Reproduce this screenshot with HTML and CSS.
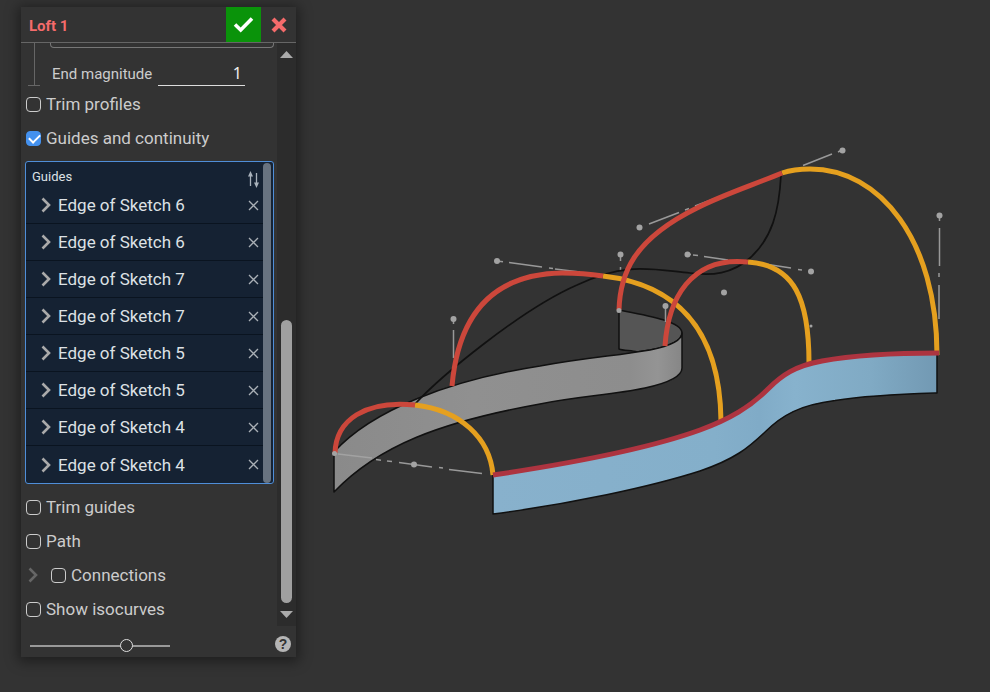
FILE: index.html
```html
<!DOCTYPE html>
<html lang="en">
<head>
<meta charset="utf-8">
<title>Loft 1</title>
<link rel="stylesheet" href="styles.css">
</head>
<body>
<main class="workspace">
  <form class="panel">
    <header class="panel-header">
      <h1 class="title">Loft 1</h1>
      <button type="button" class="accept" aria-label="Accept">
        <svg width="21" height="17" viewBox="0 0 21 17"><path d="M2 8.5 7.7 14 19 2.5" fill="none" stroke="#fff" stroke-width="3.6"/></svg>
      </button>
      <button type="button" class="cancel" aria-label="Cancel">
        <svg width="16" height="16" viewBox="0 0 16 16"><path d="M2 2 14 14M14 2 2 14" fill="none" stroke="#f56b6b" stroke-width="4.2"/></svg>
      </button>
    </header>

    <div class="panel-body">
      <div class="fields">
        <div class="magnitude-group">
          <div class="tree-line"></div>
          <div class="magnitude">
            <div class="previous-box"></div>
            <div class="magnitude-row">
              <label for="end-magnitude">End magnitude</label>
              <input id="end-magnitude" class="number" type="text" value="1">
            </div>
          </div>
        </div>

        <label class="option"><input type="checkbox">Trim profiles</label>
        <label class="option"><input type="checkbox" checked>Guides and continuity</label>

        <section class="guides">
          <div class="guides-main">
            <div class="guides-head">
              <h2>Guides</h2>
              <button type="button" aria-label="Reorder">
                <svg width="13" height="17" viewBox="0 0 13 17"><path d="M3.5 15V3M9.5 2v12" fill="none" stroke="#a9b2bb" stroke-width="1.3"/><path d="M1 5.5 3.5 0 6 5.5zM7 11.5h5L9.5 17z" fill="#a9b2bb"/></svg>
              </button>
            </div>
            <ul class="guide-list" id="guide-list"></ul>
          </div>
          <div class="guides-scroll"></div>
        </section>

        <label class="option"><input type="checkbox">Trim guides</label>
        <label class="option"><input type="checkbox">Path</label>
        <div class="nested">
          <button type="button" class="expand" aria-label="Expand connections">
            <svg width="10" height="16" viewBox="0 0 10 16"><path d="M1.5 1.5 8 8 1.5 14.5" fill="none" stroke="#666" stroke-width="2.6"/></svg>
          </button>
          <label class="option"><input type="checkbox">Connections</label>
        </div>
        <label class="option"><input type="checkbox">Show isocurves</label>
      </div>

      <div class="scrollbar">
        <button type="button" aria-label="Scroll up"><svg width="13" height="7" viewBox="0 0 13 7"><path d="M0 7 6.5 0 13 7z" fill="#aaa"/></svg></button>
        <div class="thumb"></div>
        <button type="button" aria-label="Scroll down"><svg width="13" height="7" viewBox="0 0 13 7"><path d="M0 0 6.5 7 13 0z" fill="#aaa"/></svg></button>
      </div>
    </div>

    <footer class="panel-footer">
      <input class="opacity" type="range" min="0" max="100" value="71" aria-label="Preview opacity">
      <button type="button" class="help" aria-label="Help">?</button>
    </footer>
  </form>

  <svg class="model" viewBox="296 0 694 692" preserveAspectRatio="xMinYMin meet" role="img" aria-label="Loft model">
    <defs>
      <linearGradient id="blue" x1="493" x2="937" y1="0" y2="0" gradientUnits="userSpaceOnUse">
        <stop offset="0" stop-color="#88b1cc"/><stop offset=".5" stop-color="#84afca"/><stop offset=".6" stop-color="#80abc7"/><stop offset=".68" stop-color="#87b2cd"/><stop offset=".85" stop-color="#80aac4"/><stop offset="1" stop-color="#7299b3"/>
      </linearGradient>
      <linearGradient id="grey" x1="334" x2="682" y1="0" y2="0" gradientUnits="userSpaceOnUse">
        <stop offset="0" stop-color="#8a8a8a"/><stop offset=".4" stop-color="#909090"/><stop offset=".85" stop-color="#8d8d8d"/><stop offset=".93" stop-color="#949494"/><stop offset="1" stop-color="#868686"/>
      </linearGradient>
    </defs>
    <g stroke="#111" stroke-width="1.5" stroke-linejoin="round">
      <path fill="#555" d="M619 310C645 315 682 321 682 333C682 340 670 346 650 350L637 352C632 350 624 351 619 349Z"/>
      <path fill="url(#grey)" d="M334 452C372 410 450 380 540 366C590 357 615 356 650 350C670 346 682 340 682 333V368C682 377 668 383 645 388C612 395 580 396 540 404C440 422 378 446 334 492Z"/>
      <path fill="url(#blue)" d="M493 475C560 465 645 450 700 430C730 419 750 407 768 389C782 375 795 366 822 361C860 354 900 353 937 353V393C905 394 870 395 835 400.5C800 405 782 415 765 432C748 448 735 459 700 471C650 487 570 504 493 514Z"/>
    </g>
    <g fill="none" stroke="#999" stroke-width="1.5">
      <path d="M338 454 372 458" stroke="#a2a2a2"/>
      <path d="M376 459.5l5 .7M387 461l5 .6M399 462.5 432 467M439 467.6l4 .5M449 469.5 482 473.5"/>
      <path d="M453.5 321v3M453.5 330v28M497 261l6 .8M509 262.5 542 267M549 268l4 .5M555 269 580 272"/>
      <path d="M620.5 256v5M620.5 267v3M665.5 308v14"/>
      <path d="M649 224 679 212.5M685 210l4-1.5M695 206 740 189M803 165.5 832 154M838 152l4-2"/>
      <path d="M687 254l4 .4M693 255l5 .6M704 256.5 728 260M768 264.5 791 268M798 269.6l4 .5"/>
      <path d="M939.5 216v5M939.5 228v38M939 273v4M939 285v34"/>
    </g>
    <path d="M415 404C440 377 520 310 577 285C625 262 650 269 690 273C712 276 732 274 750 258C772 238 779 212 781 175" fill="none" stroke="#111" stroke-width="1.7"/>
    <g fill="none" stroke="#e5a01f" stroke-width="5">
      <path d="M603 276C672 284 720 325 721 421"/>
      <path d="M748 262C795 265 809 300 809 363"/>
      <path d="M782 173C791 170 800 169 810 169C880 169 937 240 937 355"/>
      <path d="M415 405C460 410 490 438 493 475"/>
    </g>
    <g fill="none" stroke="#cc473b" stroke-width="5">
      <path d="M335 453C336 420 365 400 415 405"/>
      <path d="M452 386C458 318 490 274 562 273C578 273 590 274 603 276"/>
      <path d="M619 310C620 275 632 240 697 208C722 195 753 185 782 173"/>
      <path d="M665 346C668 300 690 256 748 262"/>
    </g>
    <path d="M493 475C560 465 645 450 700 430C730 419 750 407 768 389C782 375 795 366 822 361C860 354 900 353 939 353" fill="none" stroke="#ad3440" stroke-width="5"/>
    <g fill="#a3a3a3">
      <circle cx="842.5" cy="150.5" r="3"/><circle cx="939.5" cy="215.5" r="3"/><circle cx="639.5" cy="227.5" r="3"/>
      <circle cx="620.5" cy="254.5" r="3"/><circle cx="497" cy="261" r="3"/><circle cx="687.5" cy="254.5" r="3"/>
      <circle cx="811" cy="271.5" r="3"/><circle cx="724" cy="292.5" r="3"/><circle cx="665.5" cy="306" r="3"/>
      <circle cx="453.5" cy="319" r="3"/><circle cx="414" cy="464.5" r="3"/>
      <circle cx="811" cy="326" r="1.5"/><circle cx="619" cy="310.5" r="2.5"/><circle cx="334.5" cy="453.5" r="2.5"/>
    </g>
  </svg>
</main>
<script src="script.js"></script>
</body>
</html>
```
FILE: styles.css
```css
* { box-sizing: border-box; }

body {
  margin: 0;
  background: #333;
  color: #ccc;
  font: 17px/20px Roboto, "Liberation Sans", sans-serif;
}

button {
  display: flex;
  align-items: center;
  justify-content: center;
  padding: 0;
  border: 0;
  background: none;
  color: inherit;
}

svg { display: block; }

.workspace {
  display: flex;
  align-items: flex-start;
  min-height: 100vh;
  overflow: hidden;
}

.panel {
  flex: 0 0 275px;
  margin: 7px 0 0 21px;
  background: #333;
  box-shadow: 0 2px 12px 3px rgba(0, 0, 0, 0.4);
}

.model {
  flex: 1;
  min-width: 0;
}

.panel-header {
  display: flex;
  height: 36px;
  border-bottom: 1px solid #666;
}

.title {
  flex: 1;
  margin: 0;
  padding-left: 8px;
  color: #f56b6b;
  font-size: 15px;
  font-weight: 700;
  line-height: 38px;
}

.accept,
.cancel { width: 35px; }

.accept { background: #0a930a; }

.panel-body { display: flex; }

.fields {
  flex: 1;
  padding: 0 3px 0 5px;
}

.magnitude-group {
  display: flex;
  height: 44px;
  padding-left: 2px;
}

.tree-line {
  width: 12px;
  height: 43px;
  border-bottom: 1px solid #666;
  background: linear-gradient(#666, #666) center / 1px 100% no-repeat;
}

.magnitude {
  flex: 1;
  padding-left: 10px;
}

.previous-box {
  height: 5px;
  border: 1px solid #777;
  border-top: 0;
  border-radius: 0 0 4px 4px;
}

.magnitude-row {
  display: flex;
  justify-content: space-between;
  align-items: flex-end;
  height: 38px;
  padding: 0 29px 0 2px;
  font-size: 15px;
  line-height: 24px;
}

.number {
  width: 87px;
  height: 24px;
  padding: 0 3px 1px;
  border: 0;
  border-bottom: 1px solid #ddd;
  background: none;
  color: #eee;
  font: 16px/20px "Noto Sans", sans-serif;
  text-align: right;
}

.option {
  display: flex;
  align-items: center;
  gap: 5px;
  height: 34px;
}

.option input {
  width: 15px;
  height: 15px;
  margin: 0;
  border: 1px solid #ccc;
  border-radius: 4px;
  appearance: none;
}

.option input:checked {
  border-color: #4491ee;
  background: #4491ee;
}

.option input:checked::before {
  content: "";
  display: block;
  width: 9px;
  height: 5px;
  margin: 3px 2px;
  border: solid #fff;
  border-width: 0 0 2px 2px;
  transform: translateY(-1px) rotate(-45deg);
}

.nested {
  display: flex;
  align-items: center;
  gap: 12px;
}

.expand {
  width: 13px;
  height: 20px;
}

.guides {
  display: flex;
  margin: 6px 0 6px -1px;
  border: 1px solid #4f8ed8;
  border-radius: 3px;
  background: #152233;
  color: #dde1e5;
}

.guides-main { flex: 1; }

.guides-head {
  display: flex;
  justify-content: space-between;
  height: 25px;
  padding: 5px 3px 0 6px;
}

.guides-head h2 {
  margin: 0;
  font-size: 13px;
  font-weight: 400;
  line-height: 20px;
}

.guides-head button { height: 24px; }

.guide-list {
  margin: 0;
  padding: 0;
  list-style: none;
}

.guide {
  display: flex;
  align-items: center;
  height: 37px;
  padding: 0 4px 0 15px;
  border-bottom: 1px solid #0a1420;
}

.guide:last-child { border: 0; }

.guide .name {
  flex: 1;
  padding-left: 7px;
}

.guides-scroll {
  width: 8px;
  margin: 1px 2px 0 0;
  border-radius: 4px;
  background: #687380;
}

.scrollbar {
  display: flex;
  flex: 0 0 19px;
  flex-direction: column;
  align-items: center;
  background: #2c2c2c;
}

.scrollbar button {
  width: 19px;
  height: 23px;
}

.thumb {
  width: 11px;
  height: 283px;
  margin-top: auto;
  border-radius: 6px;
  background: #a0a0a0;
}

.panel-footer {
  display: flex;
  align-items: center;
  justify-content: space-between;
  height: 31px;
  padding: 0 5px 0 9px;
}

.opacity {
  width: 140px;
  height: 14px;
  margin: 8px 0 0;
  background: linear-gradient(#999, #999) center / 100% 2px no-repeat;
  appearance: none;
}

.opacity::-webkit-slider-thumb {
  width: 13px;
  height: 13px;
  border: 1px solid #ddd;
  border-radius: 50%;
  background: #333;
  appearance: none;
}

.help {
  width: 16px;
  height: 16px;
  margin-top: 4px;
  border-radius: 50%;
  background: #b5b5b5;
  color: #333;
  font: bold 14px/16px "Liberation Sans", sans-serif;
}
```
FILE: script.js
```js
const guides = [6, 6, 7, 7, 5, 5, 4, 4];
document.getElementById('guide-list').innerHTML = guides.map(n => `
  <li class="guide">
    <button type="button" aria-label="Expand"><svg width="10" height="16" viewBox="0 0 10 16"><path d="M1.5 1.5 8 8 1.5 14.5" fill="none" stroke="#aaa" stroke-width="2.6"/></svg></button>
    <span class="name">Edge of Sketch ${n}</span>
    <button type="button" aria-label="Remove"><svg width="11" height="11" viewBox="0 0 11 11"><path d="M1 1l9 9M10 1l-9 9" fill="none" stroke="#aab0b6" stroke-width="1.3"/></svg></button>
  </li>`).join('');
```
